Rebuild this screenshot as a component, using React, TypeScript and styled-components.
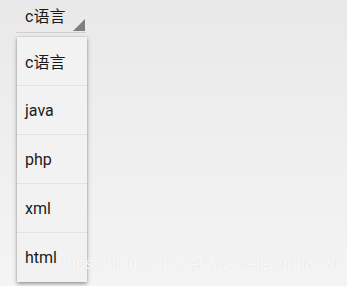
import React from 'react';
import styled, { createGlobalStyle } from 'styled-components';

const GlobalStyle = createGlobalStyle`
	html, body {
		margin: 0;
		padding: 0;
		width: 347px;
		height: 286px;
		overflow: hidden;
	}
	body {
		font-family: Roboto, 'Noto Sans CJK SC', sans-serif;
	}
`;

const Screen = styled.div`
	position: relative;
	width: 347px;
	height: 286px;
	background: linear-gradient(#e9e9e9, #f4f4f4);
	padding: 0 0 0 16px;
	box-sizing: border-box;
`;

const Spinner = styled.div`
	position: relative;
	width: 70px;
	height: 33px;
	box-sizing: border-box;
	padding: 7px 0 0 9px;
	border-bottom: 1px solid #cfcfcf;
	font-size: 16px;
	color: #1a1a1a;
	line-height: 19px;
`;

const Arrow = styled.span`
	position: absolute;
	right: 1px;
	bottom: 1px;
	width: 0;
	height: 0;
	border-left: 12px solid transparent;
	border-bottom: 12px solid #7f7f7f;
`;

const Menu = styled.ul`
	position: absolute;
	left: 17px;
	top: 37px;
	width: 70px;
	margin: 0;
	padding: 0;
	list-style: none;
	background: #f2f2f2;
	box-shadow: 0 2px 4px rgba(0, 0, 0, 0.35), 0 0 2px rgba(0, 0, 0, 0.15);
`;

const Item = styled.li`
	height: 49px;
	box-sizing: border-box;
	padding-left: 8px;
	display: flex;
	align-items: center;
	font-size: 16px;
	color: #1a1a1a;
	&:not(:last-child) {
		border-bottom: 1px solid #e2e2e2;
	}
`;

const Watermark = styled.div`
	position: absolute;
	left: 58px;
	top: 255px;
	font-family: 'Liberation Sans', Arial, sans-serif;
	font-size: 16px;
	color: rgba(255, 255, 255, 0.9);
	text-shadow: 0 0 1px rgba(0, 0, 0, 0.12);
	letter-spacing: 0.1px;
	pointer-events: none;
`;

const options = ['c语言', 'java', 'php', 'xml', 'html'];

const App: React.FunctionComponent = () => {
	return (
		<>
			<GlobalStyle />
			<Screen>
				<Spinner>
					c语言
					<Arrow />
				</Spinner>
				<Menu>
					{options.map((item) => (
						<Item key={item}>{item}</Item>
					))}
				</Menu>
				<Watermark>https://blog.csdn.net/awodefengduanwu</Watermark>
			</Screen>
		</>
	);
};

export default App;
